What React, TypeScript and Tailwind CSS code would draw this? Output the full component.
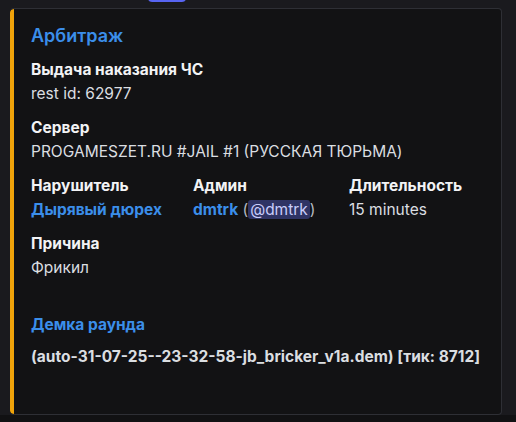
import React from "react"

const Field: React.FC<{ name: string; children: React.ReactNode }> = ({ name, children }) => {
    return (
        <div className="flex flex-col">
            <div className="text-[15.5px] leading-[24px] font-bold text-[#f2f3f5]">{name}</div>
            <div className="text-[15.5px] leading-[24px] text-[#dbdee1]">{children}</div>
        </div>
    )
}

const App: React.FC = () => {
    return (
        <div className="relative w-[516px] h-[422px] bg-[#1a1a1e] overflow-hidden" style={{ fontFamily: 'Inter, "Noto Sans", sans-serif' }}>
            {/* кнопка сверху, обрезана */}
            <div className="absolute left-[148px] top-[-6px] w-[38px] h-[8px] rounded-[4px] bg-[#5865f2]"></div>

            <div className="ml-[10px] mt-[8px] w-[492px] h-[407px] flex rounded-[4px] border border-[#2e2f35] border-l-0 bg-[#121214] overflow-hidden">
                <div className="w-[4px] bg-[#f0a30a] rounded-l-[4px] shrink-0"></div>
                <div className="flex-1 pl-[17px] pt-[14px]">
                    <div className="text-[18px] leading-[26px] font-semibold text-[#3b8eea]">Арбитраж</div>

                    <div className="mt-[9px] flex flex-col gap-[10px]">
                        <Field name="Выдача наказания ЧС">rest id: 62977</Field>
                        <Field name="Сервер">PROGAMESZET.RU #JAIL #1 (РУССКАЯ ТЮРЬМА)</Field>

                        <div className="grid grid-cols-[162px_156px_1fr]">
                            <Field name="Нарушитель">
                                <span className="font-bold text-[#3b8eea]">Дырявый дюрех</span>
                            </Field>
                            <Field name="Админ">
                                <span className="font-bold text-[#3b8eea]">dmtrk</span>
                                <span className="text-[#b5bac1]"> (</span>
                                <span className="px-[2px] rounded-[3px] bg-[#2f3465] text-[#c9cdfb]">@dmtrk</span>
                                <span className="text-[#b5bac1]">)</span>
                            </Field>
                            <Field name="Длительность">15 minutes</Field>
                        </div>

                        <Field name="Причина">Фрикил</Field>
                    </div>

                    <div className="mt-[33px] text-[15.5px] leading-[24px] font-bold text-[#3b8eea]">Демка раунда</div>
                    <div className="mt-[8px] text-[15.5px] leading-[24px] font-bold text-[#dbdee1]">
                        (auto-31-07-25--23-32-58-jb_bricker_v1a.dem) [тик: 8712]
                    </div>
                </div>
            </div>
            <div className="h-[7px] bg-[#111113]"></div>
        </div>
    )
}

export default App
